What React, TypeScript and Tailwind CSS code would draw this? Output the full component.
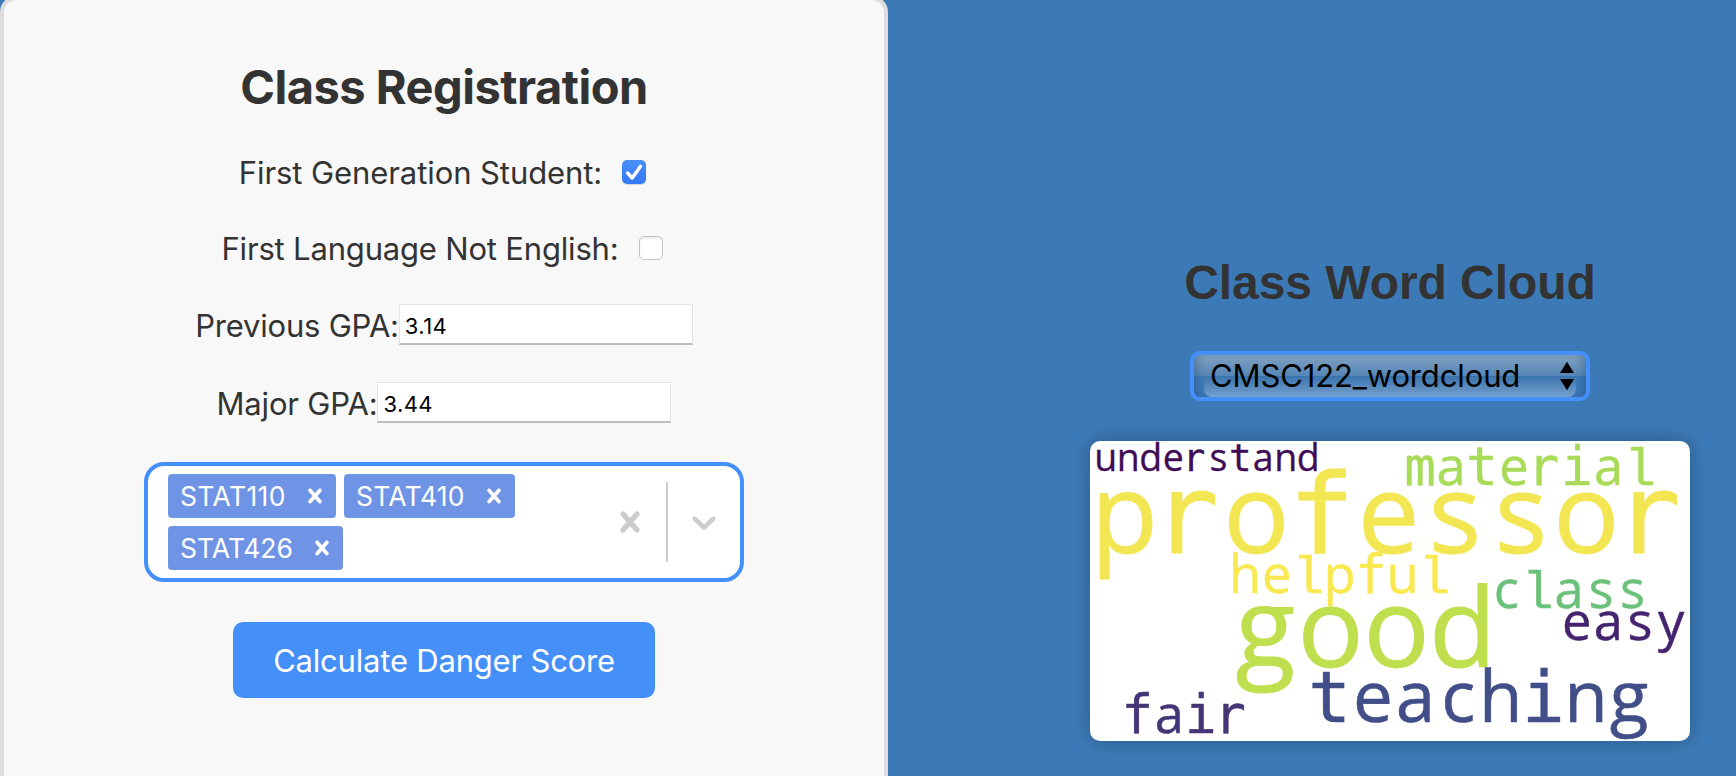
import React from "react";

const OPEN_SANS_ADVANCE: Record<string, number> = {
  a: 0.556, c: 0.476, d: 0.613, e: 0.561, g: 0.528, h: 0.613,
  n: 0.613, o: 0.604, p: 0.613, s: 0.467, u: 0.613, y: 0.502,
};

const MONO_SHIFT: Record<string, number> = { r: -0.045, f: -0.01, t: -0.01, m: 0.01 };

interface CloudWord {
  text: string;
  x: number;
  y: number;
  size: number;
  color: string;
}

const words: CloudWord[] = [
  { text: "understand", x: 4.4, y: 30, size: 37.5, color: "#400c55" },
  { text: "material", x: 313.8, y: 44, size: 52.5, color: "#a8db58" },
  { text: "professor", x: 1.5, y: 112, size: 110, color: "#f3e653" },
  { text: "helpful", x: 139.4, y: 152, size: 52.5, color: "#f9e84f" },
  { text: "class", x: 400.4, y: 167, size: 52.5, color: "#6cc17a" },
  { text: "easy", x: 471, y: 198.7, size: 52.5, color: "#45236f" },
  { text: "good", x: 141.6, y: 226.3, size: 110, color: "#bfdf4e" },
  { text: "teaching", x: 219, y: 281, size: 71, color: "#414e88" },
  { text: "fair", x: 32, y: 292, size: 52.5, color: "#443577" },
];

function Word({ text, x, y, size, color }: CloudWord) {
  return (
    <text y={y} fontSize={size} fill={color} stroke={color} strokeWidth={size * 0.008}>
      {text.split("").map((ch, i) => {
        const cell = x + i * size * 0.6;
        const adv = OPEN_SANS_ADVANCE[ch];
        if (adv !== undefined) {
          return (
            <tspan key={i} x={cell + ((0.6 - adv) / 2) * size} className="font-['Open_Sans',sans-serif]">
              {ch}
            </tspan>
          );
        }
        return (
          <tspan
            key={i}
            x={cell + (MONO_SHIFT[ch] ?? 0) * size}
            className={ch === "l" ? "font-['Liberation_Mono',monospace]" : "font-['DejaVu_Sans_Mono',monospace]"}
          >
            {ch}
          </tspan>
        );
      })}
    </text>
  );
}

function Cross({ className }: { className: string }) {
  return (
    <svg viewBox="0 0 20 20" fill="currentColor" stroke="currentColor" strokeWidth="0.35" className={className}>
      <path d="M14.348 14.849c-0.469 0.469-1.229 0.469-1.697 0l-2.651-3.030-2.651 3.029c-0.469 0.469-1.229 0.469-1.697 0-0.469-0.469-0.469-1.229 0-1.697l2.758-3.15-2.759-3.152c-0.469-0.469-0.469-1.228 0-1.697s1.228-0.469 1.697 0l2.652 3.031 2.651-3.031c0.469-0.469 1.228-0.469 1.697 0s0.469 1.229 0 1.697l-2.758 3.152 2.758 3.15c0.469 0.469 0.469 1.229 0 1.698z" />
    </svg>
  );
}

function Tag({ label, className }: { label: string; className: string }) {
  return (
    <div className={`flex h-11 items-center justify-between rounded-[4px] bg-[#6f94e6] pr-[7.5px] pl-3 text-white ${className}`}>
      <span className="text-[26.5px] leading-[44px]">{label}</span>
      <Cross className="size-7" />
    </div>
  );
}

function GpaRow({ label, value, className }: { label: string; value: string; className: string }) {
  return (
    <div className={`flex h-[41px] justify-center ${className}`}>
      <span className="text-[31px] leading-[43px] tracking-[-0.2px]">{label}</span>
      <div className="h-[41px] w-[294px] border border-b-2 border-[#e4e4e4] border-b-[#bebebe] bg-white pl-[5px] text-[22px] leading-[42px] tracking-[0.4px] text-black">
        {value}
      </div>
    </div>
  );
}

export default function App() {
  return (
    <div className="flex h-[776px] w-[1736px] overflow-hidden bg-[#3c7ab7] font-[Inter,sans-serif] text-[#333]">
      <section className="-mt-1 h-[840px] w-[888px] shrink-0 rounded-[16px] border-4 border-[#ddd] bg-[#f8f8f8]">
        <h1 className="mt-[57px] h-[60px] text-center text-[47px] leading-[60px] font-bold tracking-[-0.5px]">
          Class Registration
        </h1>
        <div className="mt-[35px] flex h-10 items-center justify-center pr-[3px]">
          <span className="pt-0.5 text-[31px] leading-[40px] tracking-[-0.08px]">First Generation Student:</span>
          <span className="ml-5 flex size-6 items-center justify-center rounded-[5px] bg-linear-to-b from-[#4a90f8] to-[#3478f6] shadow-[0_1px_1px_rgba(0,0,0,0.15)]">
            <svg viewBox="0 0 24 24" className="size-6" fill="none" stroke="white" strokeWidth="3.4" strokeLinecap="round" strokeLinejoin="round">
              <path d="M5.6 13 10.2 18 18.4 6.4" />
            </svg>
          </span>
        </div>
        <div className="mt-9 flex h-10 items-center justify-center pr-1">
          <span className="pt-0.5 text-[31px] leading-[40px] tracking-[-0.18px]">First Language Not English:</span>
          <span className="ml-5 size-6 rounded-[5px] border border-[#c4c4c4] bg-white shadow-[inset_0_2px_2px_rgba(0,0,0,0.07)]" />
        </div>
        <GpaRow label="Previous GPA:" value="3.14" className="mt-9" />
        <GpaRow label="Major GPA:" value="3.44" className="mt-[37px]" />
        <div className="mx-auto mt-[39px] flex h-[120px] w-[600px] rounded-[20px] border-4 border-[#458ff8] bg-white">
          <div className="flex w-[430px] flex-wrap content-start gap-2 pt-2 pl-5">
            <Tag label="STAT110" className="w-[168px] tracking-[0.35px]" />
            <Tag label="STAT410" className="w-[171px] tracking-[0.2px]" />
            <Tag label="STAT426" className="w-[175px]" />
          </div>
          <div className="flex flex-1 items-center text-[#ccc]">
            <Cross className="ml-8 size-10" />
            <span className="ml-4 h-20 w-0.5 bg-[#ccc]" />
            <svg viewBox="0 0 20 20" fill="currentColor" className="ml-4 size-10">
              <path d="M4.516 7.548c0.436-0.446 1.043-0.481 1.576 0l3.908 3.747 3.908-3.747c0.533-0.481 1.141-0.446 1.574 0 0.436 0.445 0.408 1.197 0 1.615-0.406 0.418-4.695 4.502-4.695 4.502-0.217 0.223-0.502 0.335-0.787 0.335s-0.57-0.112-0.789-0.335c0 0-4.287-4.084-4.695-4.502s-0.436-1.17 0-1.615z" />
            </svg>
          </div>
        </div>
        <button className="mx-auto mt-10 block h-[76px] w-[422px] rounded-[10px] bg-[#458ff8] pt-0.5 text-[31px] leading-[74px] tracking-[-0.2px] text-white">
          Calculate Danger Score
        </button>
      </section>

      <section className="ml-[202px] flex w-[600px] flex-col items-center">
        <h2 className="mt-[255px] font-['Liberation_Sans',sans-serif] text-[48px] leading-[56px] font-bold tracking-[-0.05px]">
          Class Word Cloud
        </h2>
        <div className="mt-10 h-[50px] w-[400px] rounded-[10px] border-4 border-[#458ff8] bg-linear-to-b from-[#82a1c0] from-0% via-[#5586b8] via-50% to-[#3c7ab7] to-50%">
          <div className="relative flex h-full items-center justify-between rounded-[6px] shadow-[inset_8px_0_8px_-5px_rgba(20,50,90,0.3),inset_-8px_0_8px_-5px_rgba(20,50,90,0.3)]">
            <div className="absolute right-[10px] bottom-0 left-[10px] h-[21px] rounded-b-[8px] bg-linear-to-b from-[#3973ac] to-[#74a0cc]" />
            <span className="relative ml-4 text-[31px] leading-[42px] tracking-[-0.13px] text-black">CMSC122_wordcloud</span>
            <svg viewBox="0 0 14 30" className="relative mr-3 h-[30px] w-[14px]" fill="black">
              <path d="M7 .8 14 12H0ZM7 29.2 14 18H0Z" />
            </svg>
          </div>
        </div>
        <div className="mt-10 h-[300px] w-[600px] rounded-[10px] bg-white shadow-[0_0_20px_rgba(0,0,0,0.28)]">
          <svg viewBox="0 0 600 300" className="h-[300px] w-[600px] overflow-visible">
            {words.map((w) => (
              <Word key={w.text} {...w} />
            ))}
          </svg>
        </div>
      </section>
    </div>
  );
}
